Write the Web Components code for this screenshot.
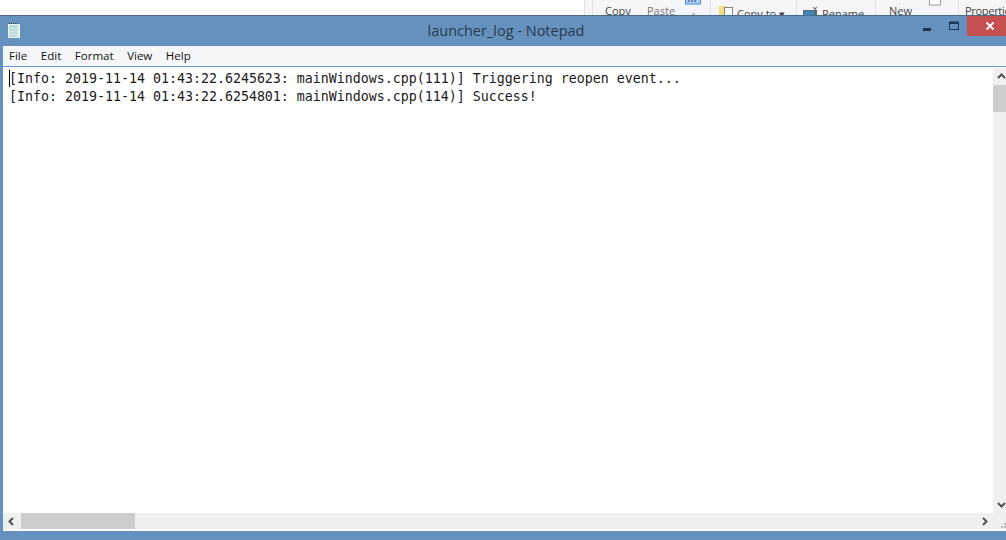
<!DOCTYPE html>
<html>
<head>
<meta charset="utf-8">
<title>launcher_log - Notepad</title>
<style>
  html, body { margin: 0; height: 100%; background: #fff; overflow: hidden; }
  body { display: flex; flex-direction: column; width: 1012px; height: 540px; font-family: "Open Sans", "Noto Sans", sans-serif; }
</style>
</head>
<body>
<explorer-ribbon></explorer-ribbon>
<notepad-window window-title="launcher_log - Notepad">
  <menu-bar slot="menu">
    <span>File</span><span>Edit</span><span>Format</span><span>View</span><span>Help</span>
  </menu-bar>
  <text-area>[Info: 2019-11-14 01:43:22.6245623: mainWindows.cpp(111)] Triggering reopen event...
[Info: 2019-11-14 01:43:22.6254801: mainWindows.cpp(114)] Success!</text-area>
</notepad-window>

<script>
// Ribbon del explorador que asoma por detrás de la ventana
class ExplorerRibbon extends HTMLElement {
  connectedCallback() {
    this.attachShadow({ mode: "open" }).innerHTML = `
      <style>
        :host { display: block; height: 15px; flex: none; background: #fff; overflow: hidden; }
        .bar { display: flex; height: 15px; margin-left: 584px; background: #f5f6f7; color: #444; font: 11px "Open Sans", sans-serif; border-left: 1px solid #dfe0e2; }
        .group { position: relative; border-right: 1px solid #dfe0e2; height: 15px; white-space: nowrap; flex: none; }
        span { position: absolute; line-height: 14px; }
        svg { position: absolute; }
      </style>
      <div class="bar">
        <div class="group" style="width:7px"></div>
        <div class="group" style="width:117px">
          <span style="left:12px;top:4px">Copy</span>
          <span style="left:54px;top:4px;color:#777">Paste</span>
          <svg style="left:92px;top:0" width="17" height="15">
            <rect x=".5" y="-3" width="15" height="7" fill="#a9cdf5" stroke="#4f8ede"/>
            <path d="M4 0v2M7 0v2M10 0v2" stroke="#345"/>
            <path d="M7 14h3" stroke="#888"/>
          </svg>
        </div>
        <div class="group" style="width:85px">
          <svg style="left:8px;top:6px" width="17" height="9"><rect x="0" y="0" width="8" height="9" fill="#f4dc85"/><rect x="5.500" y="1.500" width="8" height="9" fill="#fff" stroke="#888"/></svg>
          <span style="left:26px;top:7px">Copy to ▾</span>
        </div>
        <div class="group" style="width:78px">
          <svg style="left:6px;top:6px" width="18" height="9"><rect x=".5" y="4.500" width="13" height="6" fill="#3f88b8" stroke="#666"/><path d="M10 1.500l2 1 2-1M12 2.500V9" stroke="#555" fill="none"/></svg>
          <span style="left:25px;top:7px">Rename</span>
        </div>
        <div class="group" style="width:82px">
          <span style="left:13px;top:4px">New</span>
          <svg style="left:53px;top:0" width="13" height="7"><rect x=".5" y="-3" width="11" height="8" fill="#fff" stroke="#999"/></svg>
        </div>
        <div class="group" style="flex:1;border:0">
          <span style="left:6px;top:4px;letter-spacing:-.3px">Properties</span>
        </div>
      </div>`;
  }
}

class NotepadWindow extends HTMLElement {
  connectedCallback() {
    const title = this.getAttribute("window-title") ?? "";
    this.attachShadow({ mode: "open" }).innerHTML = `
      <style>
        :host { display: flex; flex-direction: column; flex: 1; min-height: 0; background: #6591bf; padding: 0 2px 9px 3px; border-top: 1px solid #47698c; }
        .title { display: flex; align-items: flex-start; height: 30px; flex: none; margin: 0 -2px 0 -3px; position: relative; }
        .icon { margin: 6px 0 0 6px; }
        h1 { position: absolute; left: 0; right: 0; top: 5px; margin: 0; text-align: center; font: 400 14.500px/20px "Open Sans", sans-serif; color: #2b3a4c; }
        .controls { margin-left: auto; display: flex; height: 20px; }
        .btn { width: 27px; display: flex; align-items: center; justify-content: center; }
        .close { width: 45px; background: #c75050; }
        .client { flex: 1; min-height: 0; display: flex; flex-direction: column; background: #fff; padding-bottom: 2px; }
      </style>
      <div class="title">
        <svg class="icon" width="15" height="17" viewBox="0 0 15 17">
          <rect x="2" y="2" width="12" height="14" fill="#eef4f2"/>
          <rect x="3" y="3" width="9" height="12" fill="#b9dcdc"/>
          <path d="M3 6.500h9M3 9.500h9M3 12.500h9" stroke="#cfe8e6"/>
          <path d="M3 1.500h10" stroke="#33424f" stroke-dasharray="1 1"/>
        </svg>
        <h1>${title}</h1>
        <div class="controls">
          <div class="btn"><svg width="10" height="10"><rect x="1" y="7" width="8" height="3" fill="#1d3553"/></svg></div>
          <div class="btn"><svg width="12" height="10"><rect x="1.500" y="1" width="9" height="7.500" fill="none" stroke="#1d3553"/><rect x="1" y="1" width="10" height="2" fill="#1d3553"/></svg></div>
          <div class="btn close"><svg width="10" height="10"><path d="M1.500 1.500l7 7M8.500 1.500l-7 7" stroke="#fff" stroke-width="1.800"/></svg></div>
        </div>
      </div>
      <slot name="menu"></slot>
      <div class="client"><slot></slot></div>`;
  }
}

class MenuBar extends HTMLElement {
  connectedCallback() {
    this.attachShadow({ mode: "open" }).innerHTML = `
      <style>
        :host { display: flex; flex: none; gap: 13.600px; height: 20px; padding: 0 0 0 6px; background: #f5f6f7; border-bottom: 1px solid #6a9ccb; font: 11.500px/20px "Open Sans", sans-serif; color: #111; }
      </style>
      <slot></slot>`;
  }
}

class TextArea extends HTMLElement {
  connectedCallback() {
    this.attachShadow({ mode: "open" }).innerHTML = `
      <style>
        :host { flex: 1; min-height: 0; display: grid; grid-template-columns: 1fr 17px; grid-template-rows: 1fr 16px; }
        pre { margin: 0; padding: 3px 0 0 6px; position: relative; font: 13.290px/18px "DejaVu Sans Mono", monospace; color: #1a1a1a; overflow: hidden; }
        .caret { position: absolute; left: 6px; top: 3px; width: 1px; height: 17px; background: #000; }
        .v, .h { background: #f0f0f0; display: flex; }
        .v { flex-direction: column; margin-top: 1px; }
        .arrow { flex: none; width: 17px; height: 17px; display: flex; align-items: center; justify-content: center; }
        .h .arrow { height: 16px; }
        .thumb { background: #cdcdcd; flex: none; }
        .v .thumb { height: 27px; }
        .h .thumb { width: 114px; margin-left: 1px; }
        .corner { background: #f0f0f0; display: flex; align-items: flex-end; justify-content: flex-end; }
        .push { flex: 1; }
      </style>
      <pre><i class="caret"></i><slot></slot></pre>
      <div class="v">
        <div class="arrow"><svg width="9" height="7"><path d="M1 5l3.500-3.500L8 5" fill="none" stroke="#505050" stroke-width="2"/></svg></div>
        <div class="thumb"></div><div class="push"></div>
        <div class="arrow"><svg width="9" height="7"><path d="M1 2l3.500 3.500L8 2" fill="none" stroke="#505050" stroke-width="2"/></svg></div>
      </div>
      <div class="h">
        <div class="arrow"><svg width="7" height="9"><path d="M5 1L1.500 4.500 5 8" fill="none" stroke="#505050" stroke-width="2"/></svg></div>
        <div class="thumb"></div><div class="push"></div>
        <div class="arrow"><svg width="7" height="9"><path d="M2 1l3.500 3.500L2 8" fill="none" stroke="#505050" stroke-width="2"/></svg></div>
      </div>
      <div class="corner">
        <svg width="17" height="16"><path d="M8 13h2v2H8zM11 13h2v2h-2zM11 10h2v2h-2zM14 13h2v2h-2zM14 10h2v2h-2zM14 7h2v2h-2z" fill="#bcbcbc"/></svg>
      </div>`;
  }
}

customElements.define("explorer-ribbon", ExplorerRibbon);
customElements.define("notepad-window", NotepadWindow);
customElements.define("menu-bar", MenuBar);
customElements.define("text-area", TextArea);
</script>
</body>
</html>
